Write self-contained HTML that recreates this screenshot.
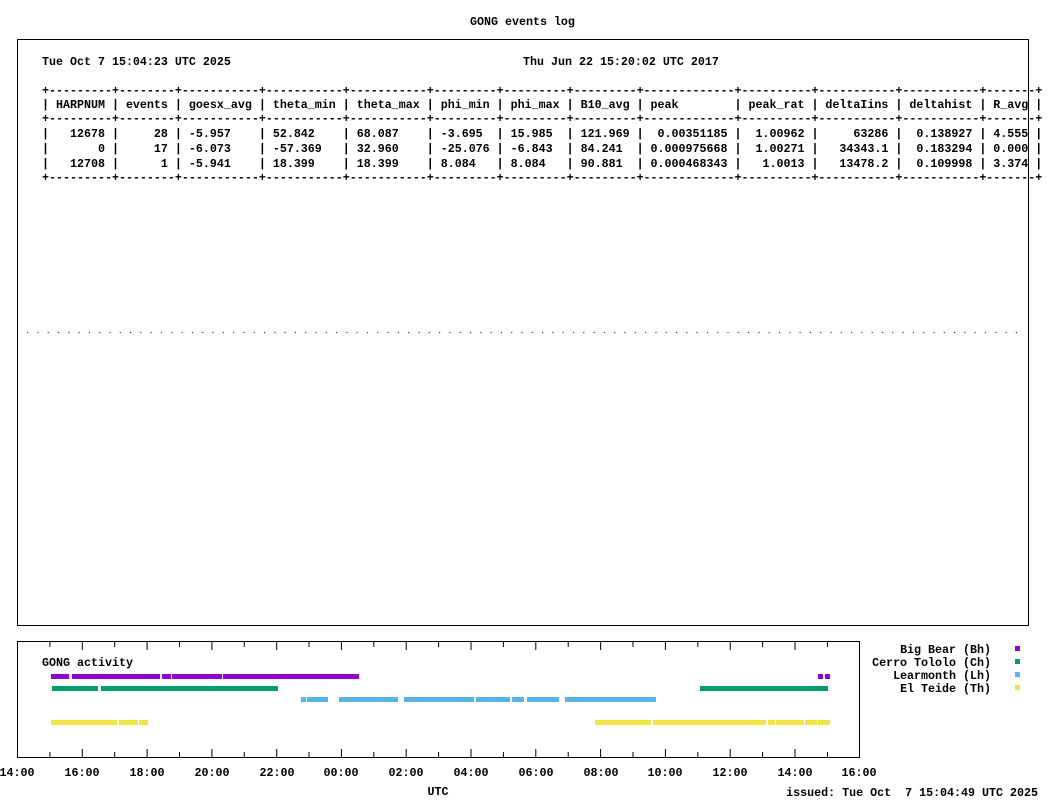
<!DOCTYPE html>
<html><head><meta charset="utf-8"><style>
html,body{margin:0;padding:0;background:#fff;}
svg{display:block;}
text{font-family:"Liberation Mono",monospace;font-weight:bold;font-size:11.67px;fill:#000;white-space:pre;}
</style></head><body>
<svg width="1050" height="800" viewBox="0 0 1050 800" xmlns="http://www.w3.org/2000/svg">
<text x="470" y="25">GONG events log</text>
<rect x="17.5" y="39.5" width="1011" height="586" fill="none" stroke="#000" stroke-width="1"/>
<text x="42" y="65">Tue Oct 7 15:04:23 UTC 2025</text>
<text x="523" y="65">Thu Jun 22 15:20:02 UTC 2017</text>
<g>
<text x="42" y="94">+---------+--------+-----------+-----------+-----------+---------+---------+---------+-------------+----------+-----------+-----------+-------+</text>
<text x="42" y="108">| HARPNUM | events | goesx_avg | theta_min | theta_max | phi_min | phi_max | B10_avg | peak        | peak_rat | deltaIins | deltahist | R_avg |</text>
<text x="42" y="122">+---------+--------+-----------+-----------+-----------+---------+---------+---------+-------------+----------+-----------+-----------+-------+</text>
<text x="42" y="137">|   12678 |     28 | -5.957    | 52.842    | 68.087    | -3.695  | 15.985  | 121.969 |  0.00351185 |  1.00962 |     63286 |  0.138927 | 4.555 |</text>
<text x="42" y="152">|       0 |     17 | -6.073    | -57.369   | 32.960    | -25.076 | -6.843  | 84.241  | 0.000975668 |  1.00271 |   34343.1 |  0.183294 | 0.000 |</text>
<text x="42" y="167">|   12708 |      1 | -5.941    | 18.399    | 18.399    | 8.084   | 8.084   | 90.881  | 0.000468343 |   1.0013 |   13478.2 |  0.109998 | 3.374 |</text>
<text x="42" y="181">+---------+--------+-----------+-----------+-----------+---------+---------+---------+-------------+----------+-----------+-----------+-------+</text>
</g>
<line x1="27" y1="332.5" x2="1022" y2="332.5" stroke="#9400d3" stroke-width="1.2" stroke-dasharray="1.2 9.1"/>

<rect x="17.5" y="641.5" width="842" height="116" fill="none" stroke="#000" stroke-width="1"/>
<g stroke="#000" stroke-width="1" id="ticks">
<path d="M49.9 642v5M82.3 642v8M114.7 642v5M147.1 642v8M179.5 642v5M211.9 642v8M244.3 642v5M276.7 642v8M309 642v5M341.4 642v8M373.8 642v5M406.2 642v8M438.6 642v5M471 642v8M503.4 642v5M535.8 642v8M568.2 642v5M600.6 642v8M633 642v5M665.4 642v8M697.8 642v5M730.2 642v8M762.6 642v5M795 642v8M827.4 642v5"/>
<path d="M49.9 757v-5M82.3 757v-8M114.7 757v-5M147.1 757v-8M179.5 757v-5M211.9 757v-8M244.3 757v-5M276.7 757v-8M309 757v-5M341.4 757v-8M373.8 757v-5M406.2 757v-8M438.6 757v-5M471 757v-8M503.4 757v-5M535.8 757v-8M568.2 757v-5M600.6 757v-8M633 757v-5M665.4 757v-8M697.8 757v-5M730.2 757v-8M762.6 757v-5M795 757v-8M827.4 757v-5"/>
</g>
<text x="42" y="666">GONG activity</text>
<g fill="#9400d3">
<rect x="51" y="674" width="18" height="5"/><rect x="72" y="674" width="88" height="5"/><rect x="162" y="674" width="9" height="5"/><rect x="172" y="674" width="50" height="5"/><rect x="223" y="674" width="136" height="5"/><rect x="818" y="674" width="5" height="5"/><rect x="825" y="674" width="5" height="5"/>
</g>
<g fill="#009e73">
<rect x="52" y="686" width="46" height="5"/><rect x="101" y="686" width="177" height="5"/><rect x="700" y="686" width="128" height="5"/>
</g>
<g fill="#56b4e9">
<rect x="301" y="697" width="5" height="5"/><rect x="307" y="697" width="21" height="5"/><rect x="339" y="697" width="59" height="5"/><rect x="404" y="697" width="70" height="5"/><rect x="476" y="697" width="34" height="5"/><rect x="512" y="697" width="12" height="5"/><rect x="527" y="697" width="32" height="5"/><rect x="565" y="697" width="91" height="5"/>
</g>
<g fill="#f0e442">
<rect x="51" y="720" width="66" height="5"/><rect x="119" y="720" width="19" height="5"/><rect x="139" y="720" width="9" height="5"/><rect x="595" y="720" width="56" height="5"/><rect x="653" y="720" width="113" height="5"/><rect x="768" y="720" width="7" height="5"/><rect x="776" y="720" width="28" height="5"/><rect x="805" y="720" width="12" height="5"/><rect x="818" y="720" width="12" height="5"/>
</g>
<g text-anchor="middle">
<text x="17" y="776" text-anchor="middle">14:00</text>
<text x="82" y="776" text-anchor="middle">16:00</text>
<text x="147" y="776" text-anchor="middle">18:00</text>
<text x="212" y="776" text-anchor="middle">20:00</text>
<text x="277" y="776" text-anchor="middle">22:00</text>
<text x="341" y="776" text-anchor="middle">00:00</text>
<text x="406" y="776" text-anchor="middle">02:00</text>
<text x="471" y="776" text-anchor="middle">04:00</text>
<text x="536" y="776" text-anchor="middle">06:00</text>
<text x="601" y="776" text-anchor="middle">08:00</text>
<text x="665" y="776" text-anchor="middle">10:00</text>
<text x="730" y="776" text-anchor="middle">12:00</text>
<text x="795" y="776" text-anchor="middle">14:00</text>
<text x="859" y="776" text-anchor="middle">16:00</text>
</g>
<text x="438" y="795" text-anchor="middle">UTC</text>
<text x="1038" y="796" text-anchor="end">issued: Tue Oct  7 15:04:49 UTC 2025</text>
<text x="991" y="653" text-anchor="end">Big Bear (Bh)</text>
<text x="991" y="666" text-anchor="end">Cerro Tololo (Ch)</text>
<text x="991" y="679" text-anchor="end">Learmonth (Lh)</text>
<text x="991" y="692" text-anchor="end">El Teide (Th)</text>
<rect x="1015" y="646" width="5" height="5" fill="#9400d3"/>
<rect x="1015" y="659" width="5" height="5" fill="#009e73"/>
<rect x="1015" y="672" width="5" height="5" fill="#56b4e9"/>
<rect x="1015" y="685" width="5" height="5" fill="#f0e442"/>
</svg>
</body></html>
